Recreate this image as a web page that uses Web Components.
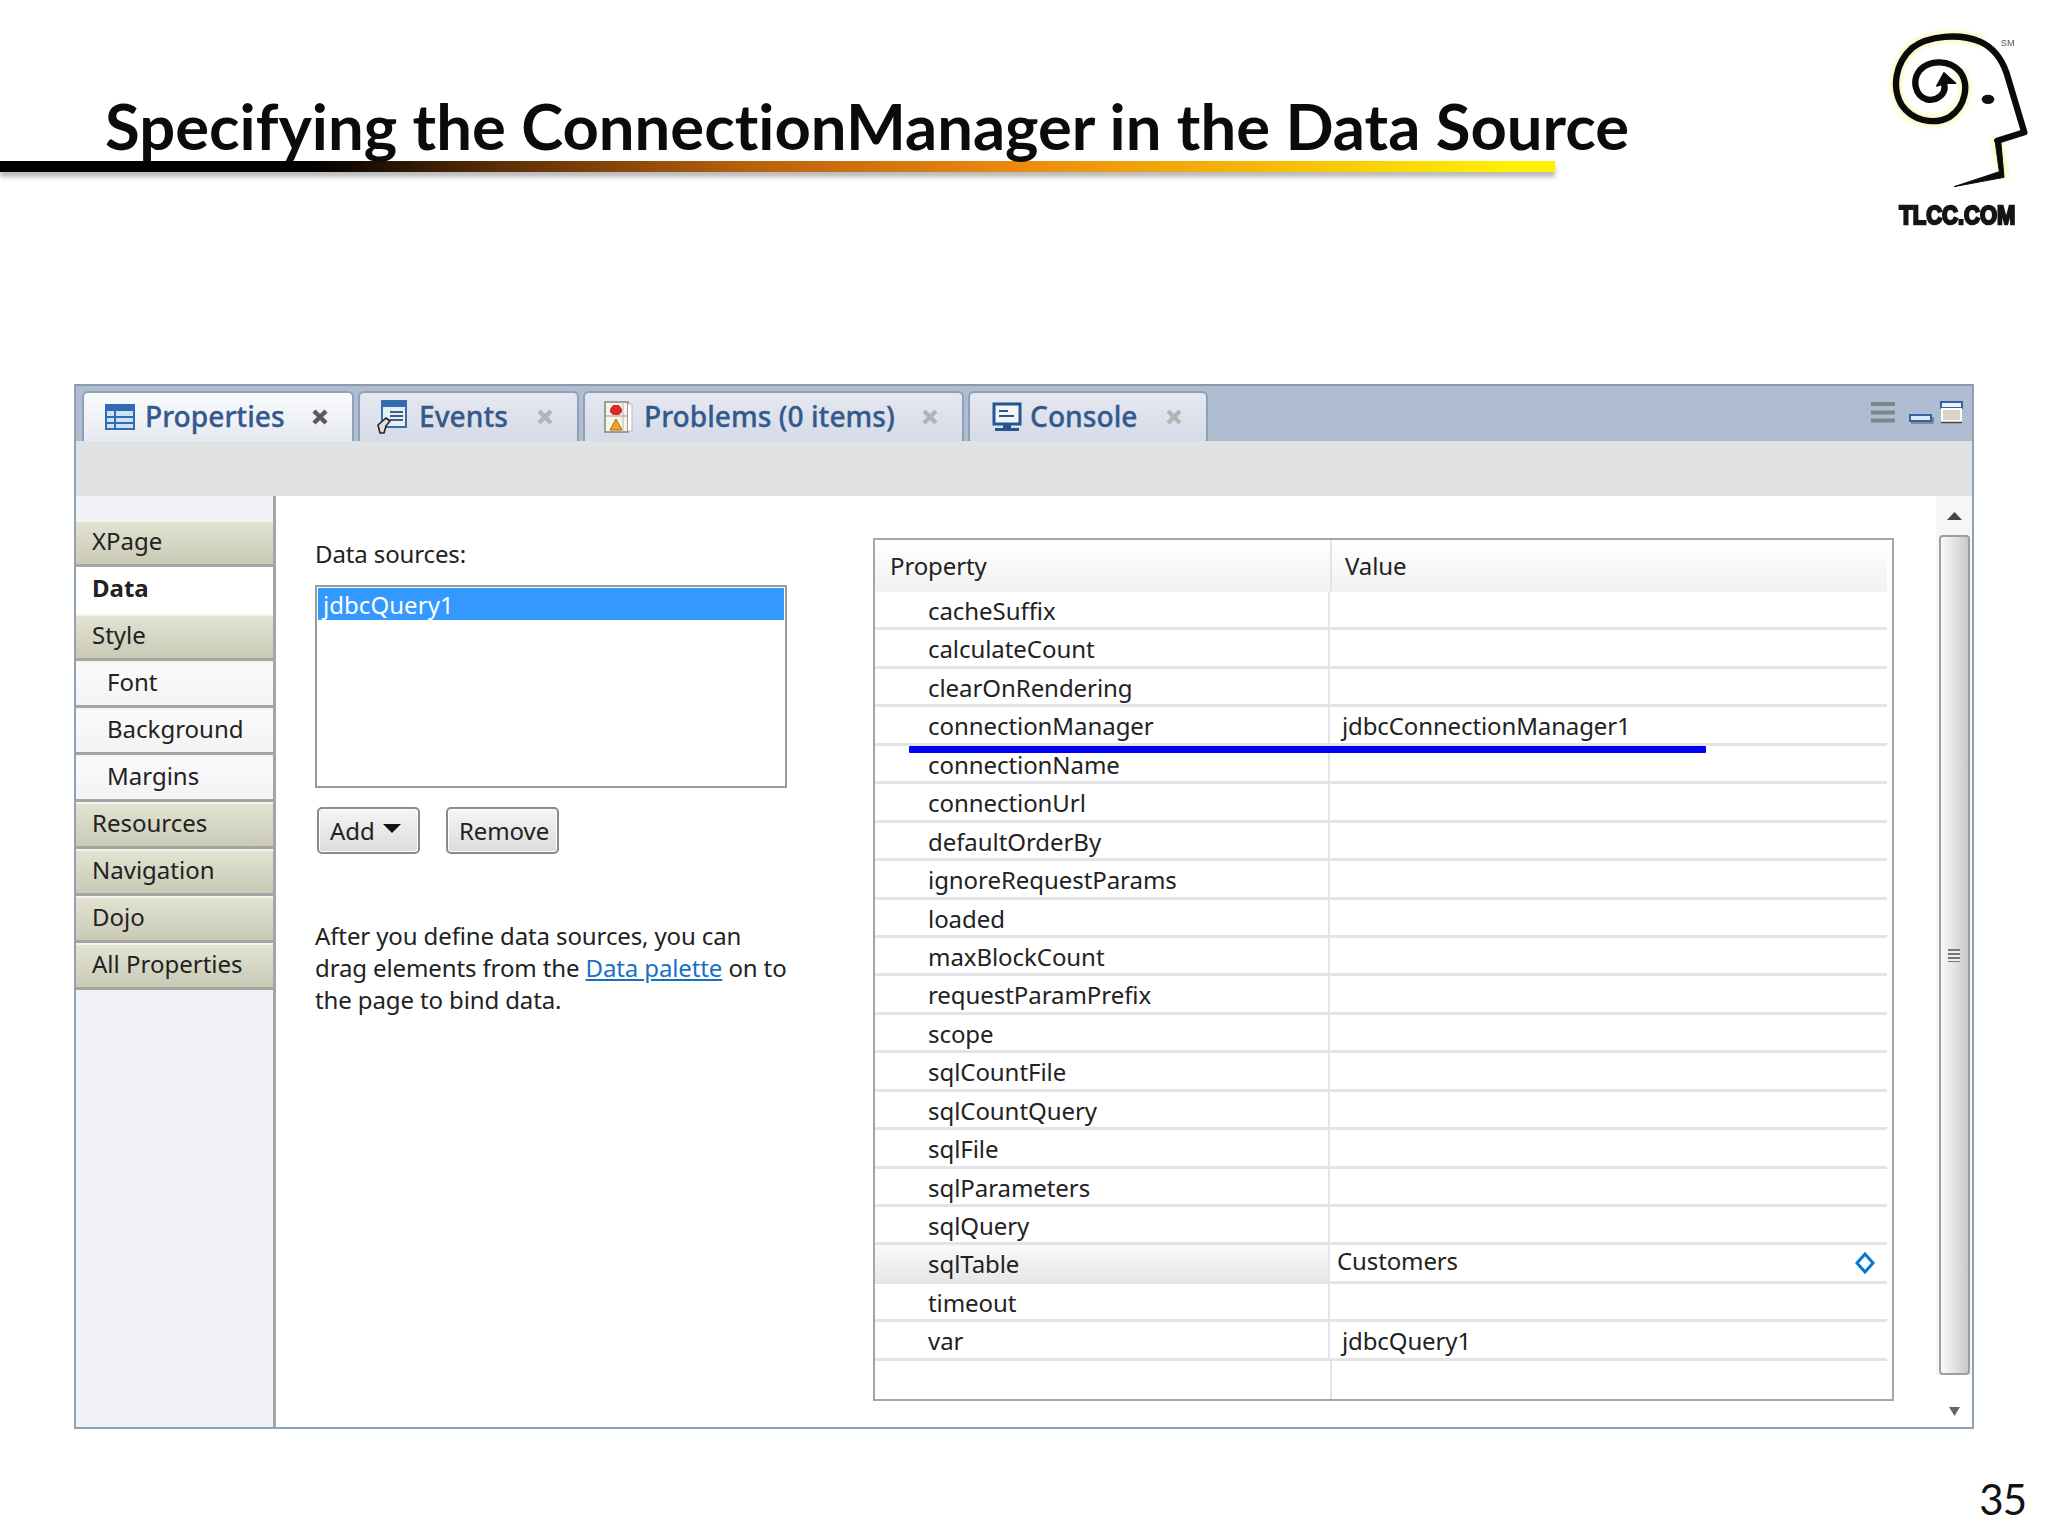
<!DOCTYPE html>
<html><head><meta charset="utf-8">
<style>
html,body{margin:0;padding:0;background:#fff}
body{width:2048px;height:1536px;overflow:hidden}
</style></head><body>
<x-slide>
  <x-slide-header slot="header" title-text="Specifying the ConnectionManager in the Data Source"></x-slide-header>
  <x-panel>
    <x-tab slot="tabs" active label="Properties" icon="table" style="--w:272px;--gap:10px;--pl:21px"></x-tab>
    <x-tab slot="tabs" label="Events" icon="events" style="--w:221px;--gap:12px;--pl:17px"></x-tab>
    <x-tab slot="tabs" label="Problems (0 items)" icon="problems" style="--w:381px;--gap:10px;--pl:19px"></x-tab>
    <x-tab slot="tabs" label="Console" icon="console" style="--w:240px;--gap:8px;--pl:22px"></x-tab>
    <x-side-item slot="side" label="XPage"></x-side-item>
    <x-side-item slot="side" label="Data" kind="current"></x-side-item>
    <x-side-item slot="side" label="Style"></x-side-item>
    <x-side-item slot="side" label="Font" kind="sub"></x-side-item>
    <x-side-item slot="side" label="Background" kind="sub"></x-side-item>
    <x-side-item slot="side" label="Margins" kind="sub"></x-side-item>
    <x-side-item slot="side" label="Resources"></x-side-item>
    <x-side-item slot="side" label="Navigation"></x-side-item>
    <x-side-item slot="side" label="Dojo"></x-side-item>
    <x-side-item slot="side" label="All Properties"></x-side-item>
    <x-data-sources slot="left"></x-data-sources>
    <x-prop-table slot="right">
      <x-prop-row name="cacheSuffix"></x-prop-row>
      <x-prop-row name="calculateCount"></x-prop-row>
      <x-prop-row name="clearOnRendering"></x-prop-row>
      <x-prop-row name="connectionManager" value="jdbcConnectionManager1"></x-prop-row>
      <x-prop-row name="connectionName"></x-prop-row>
      <x-prop-row name="connectionUrl"></x-prop-row>
      <x-prop-row name="defaultOrderBy"></x-prop-row>
      <x-prop-row name="ignoreRequestParams"></x-prop-row>
      <x-prop-row name="loaded"></x-prop-row>
      <x-prop-row name="maxBlockCount"></x-prop-row>
      <x-prop-row name="requestParamPrefix"></x-prop-row>
      <x-prop-row name="scope"></x-prop-row>
      <x-prop-row name="sqlCountFile"></x-prop-row>
      <x-prop-row name="sqlCountQuery"></x-prop-row>
      <x-prop-row name="sqlFile"></x-prop-row>
      <x-prop-row name="sqlParameters"></x-prop-row>
      <x-prop-row name="sqlQuery"></x-prop-row>
      <x-prop-row name="sqlTable" value="Customers" selected></x-prop-row>
      <x-prop-row name="timeout"></x-prop-row>
      <x-prop-row name="var" value="jdbcQuery1"></x-prop-row>
    </x-prop-table>
  </x-panel>
</x-slide>
<script>
const UI='"Noto Sans","Open Sans",sans-serif';
class Base extends HTMLElement{
  constructor(){super();this.attachShadow({mode:'open'});}
  connectedCallback(){this.shadowRoot.innerHTML=this.render();}
}
customElements.define('x-slide',class extends Base{render(){return `<style>
:host{display:flex;flex-direction:column;width:2048px;height:1536px;position:relative;font-family:${UI};color:#1a1a1a}
.win{margin:0 74px 0 74px}
footer{display:flex;justify-content:flex-end;padding:43px 22px 0 0;font:42px/54px Lato,"Liberation Sans",sans-serif;letter-spacing:-1px;color:#111}
</style><slot name="header"></slot><div class="win"><slot></slot></div><footer>35</footer>`}});

customElements.define('x-logo',class extends Base{render(){return `<style>:host{display:block;width:268px;height:250px}svg{display:block;filter:blur(.5px)}</style>
<svg width="268" height="250" viewBox="0 0 804 750">
<defs><filter id="b"><feGaussianBlur stdDeviation="8"/></filter></defs>
<g fill="none" stroke-linejoin="round" stroke-linecap="round">
<path d="M540 215C570 255 555 320 510 350C460 378 395 360 365 315C335 265 345 190 395 145C445 105 540 100 600 125M652 425L668 522" stroke="#f1f27a" stroke-width="30" filter="url(#b)" opacity=".6"/>
<path d="M490 245C505 280 470 305 440 298C405 288 395 240 420 210C450 178 510 180 540 215C570 255 555 320 510 350C460 378 395 360 365 315C335 265 345 190 395 145C445 105 540 100 600 125C645 145 668 185 680 220L733 397L652 422" stroke="#0b0b0b" stroke-width="19"/>
<path d="M645 420L658 515L522 560L672 532L662 420Z" fill="#0b0b0b" stroke="#0b0b0b" stroke-width="3"/>
<path d="M470 258L492 218L527 250L497 250Z" fill="#0b0b0b" stroke="#0b0b0b" stroke-width="4"/>
</g>
<ellipse cx="624" cy="298" rx="19" ry="14" fill="#111"/>
<text x="662" y="138" font-family="Liberation Sans,sans-serif" font-size="28" fill="#555">SM</text>
<text x="358" y="672" textLength="348" lengthAdjust="spacingAndGlyphs" font-family="Liberation Sans,sans-serif" font-weight="700" font-size="78" fill="#151515" stroke="#151515" stroke-width="7">TLCC.COM</text>
</svg>`}});

customElements.define('x-slide-header',class extends Base{render(){return `<style>
:host{display:grid;grid-template-columns:1fr 268px;height:384px;font-family:Lato,"Liberation Sans",sans-serif}
h1{margin:0;padding:84px 0 0 105px;height:77px;font:700 63.4px/83px Lato,"Liberation Sans",sans-serif;font-variant-ligatures:none;color:#0b0b0b;white-space:nowrap;position:relative;z-index:1}
.rule{width:1555px;height:11px;background:linear-gradient(90deg,#000 0,#000 20%,#5a2e06 32%,#b8600c 48%,#ea8a10 65%,#f5b508 80%,#fff000 97%,#fff000 100%);box-shadow:0 5px 4px rgba(120,120,120,.5)}
</style><div><h1>${this.getAttribute('title-text')}</h1><div class="rule"></div></div><x-logo></x-logo>`}});

const tabIcons={
table:`<svg width="30" height="26" viewBox="0 0 30 26"><rect x="1" y="1" width="28" height="24" fill="#cfe2f5" stroke="#2f6cb0" stroke-width="2"/><rect x="1" y="1" width="28" height="6" fill="#2f6cb0"/><path d="M2 13H28M2 19H28M10 7V25" stroke="#2f6cb0" stroke-width="2"/></svg>`,
events:`<svg width="30" height="34" viewBox="0 0 30 34"><rect x="5" y="1" width="24" height="26" fill="#e6eef8" stroke="#3a6ea8" stroke-width="2"/><rect x="5" y="1" width="24" height="6" fill="#2f6cb0"/><path d="M13 12H26M13 16H26M13 20H26" stroke="#3a5f88" stroke-width="2"/><path d="M1 25L9 18L13 21L9 26L7 33H3Z" fill="#ddd" stroke="#222" stroke-width="1.6"/></svg>`,
problems:`<svg width="30" height="32" viewBox="0 0 30 32"><rect x="1" y="1" width="23" height="30" fill="#f6f4ea" stroke="#8a8a80" stroke-width="1.6"/><path d="M24 3H28V30H24M19 1V31" fill="#fff" stroke="#b8b8ae"/><path d="M1 15H24" stroke="#999"/><path d="M9 4H15L18 8V11L15 14H9L6 11V8Z" fill="#d92a2a"/><path d="M12 18L18 29H6Z" fill="#f0a52a" stroke="#a86a10"/></svg>`,
console:`<svg width="30" height="30" viewBox="0 0 30 30"><rect x="2" y="2" width="26" height="20" fill="#f3f5fa" stroke="#24578f" stroke-width="3"/><path d="M7 9H16M7 14H22" stroke="#24578f" stroke-width="2"/><path d="M11 23H19V26H11Z" fill="#24578f"/><rect x="3" y="26" width="24" height="3" fill="#24578f"/></svg>`};
customElements.define('x-tab',class extends Base{render(){const a=this.hasAttribute('active');return `<style>
:host{display:flex;box-sizing:border-box;width:var(--w);height:50px;margin-right:4px;align-items:center;padding:0 24px 0 var(--pl);border:2px solid #8ea1b8;border-bottom:0;border-radius:6px 6px 0 0;background:linear-gradient(180deg,${a?'#fafbfd,#e6e9f1':'#e6e8f0,#d5dbe7'});color:#34598c;font:500 28.2px/36px ${UI};-webkit-text-stroke:.3px #34598c;white-space:nowrap}
.i{display:flex;margin-right:var(--gap)}
.l{position:relative;top:-1px}
svg.x{margin-left:auto;display:block}
</style><span class="i">${tabIcons[this.getAttribute('icon')]}</span><span class="l">${this.getAttribute('label')}</span><svg class="x" width="16" height="16" viewBox="0 0 16 16"><path d="M2 2L14 14M14 2L2 14" stroke="${a?'#5a5a5a':'#b4b4b4'}" stroke-width="4.4"/></svg>`}});

customElements.define('x-side-item',class extends Base{render(){const k=this.getAttribute('kind');
const bg=k==='current'?'#fff':k==='sub'?'linear-gradient(#fbfbfc,#f3f3f5)':'linear-gradient(#e3e3d3,#c9c9b6)';
return `<style>
:host{display:flex;align-items:center;box-sizing:border-box;height:47px;padding-left:${k==='sub'?31:16}px;padding-bottom:5px;background:${bg};
border-top:${k==='current'?'0':'2px solid #f5f5ee'};border-bottom:${k==='current'?'0':'3px solid #a5a6a4'};
font:${k==='current'?'700':'400'} 24px/30px ${UI};color:#222;white-space:nowrap}
</style>${this.getAttribute('label')}`}});

customElements.define('x-push-button',class extends Base{render(){return `<style>
:host{display:inline-flex;align-items:center;box-sizing:border-box;height:47px;padding:0 9px 0 11px;border:2px solid #8b8b8b;border-radius:5px;background:linear-gradient(#f5f5f5,#dcdcdc);font:24px/30px ${UI};letter-spacing:-.1px;color:#222;box-shadow:inset 0 0 0 1px #fff}
.c{width:0;height:0;margin-left:8px;margin-top:-5px;border:9px solid transparent;border-top:9px solid #111;border-bottom:0}
</style><slot></slot>${this.hasAttribute('menu')?'<span class="c"></span>':''}`}});

customElements.define('x-data-sources',class extends Base{render(){return `<style>
:host{display:block;width:480px;font:24px/32px ${UI};letter-spacing:-.12px;color:#222}
.list{box-sizing:border-box;width:472px;height:203px;margin-top:15px;border:2px solid #9a9a9a;padding:1px;background:#fff}
.sel{height:32px;line-height:34px;background:#3399ff;color:#fff;padding-left:5px;letter-spacing:.05px}
.btns{display:flex;gap:26px;margin-top:19px;padding-left:2px}
p{margin:66px 0 0;width:490px}
a{color:#1a6fc4;text-decoration:underline}
</style><div>Data sources:</div><div class="list"><div class="sel">jdbcQuery1</div></div>
<div class="btns"><x-push-button menu style="width:103px">Add</x-push-button><x-push-button style="width:113px">Remove</x-push-button></div>
<p>After you define data sources, you can<br>drag elements from the <a>Data palette</a> on to<br>the page to bind data.</p>`}});

customElements.define('x-prop-row',class extends Base{render(){const s=this.hasAttribute('selected');return `<style>
:host{display:grid;grid-template-columns:455px 1fr;box-sizing:border-box;height:38.45px;font:24px/38px ${UI};color:#222;border-bottom:3px solid #e4e4e8;white-space:nowrap}
.n{padding-left:53px;letter-spacing:-.06px;border-right:2px solid #e4e4e8;${s?'background:linear-gradient(#fafafa,#e6e6e6);':''}}
.v{position:relative;padding-left:${s?7:12}px;${s?'margin-top:-3px;':''}}
svg{position:absolute;right:12px;top:10px}
</style><div class="n">${this.getAttribute('name')}</div><div class="v">${this.getAttribute('value')||''}${s?'<svg width="20" height="22" viewBox="0 0 20 22"><path d="M10 2L18 11L10 20L2 11Z" fill="#fff" stroke="#0a78d0" stroke-width="3"/></svg>':''}</div>`}});

customElements.define('x-prop-table',class extends Base{render(){return `<style>
:host{display:block;box-sizing:border-box;position:relative;width:1021px;height:863px;border:2px solid #a6a6a6;background:#fff;font:24px/34px ${UI};letter-spacing:-.12px;color:#222;padding-right:5px}
.h{display:grid;grid-template-columns:455px 1fr;height:52px;align-items:center;background:linear-gradient(#fff,#f1f1f1)}
.h div{padding-left:15px}.h div+div{padding-left:13px;border-left:2px solid #e4e4e8;line-height:52px}
.fill{position:absolute;left:455px;bottom:0;height:38px;border-left:2px solid #e4e4e8}
.mark{position:absolute;left:34px;top:206px;width:797px;height:7px;background:#0000ff;border-radius:1px}
</style><div class="h"><div>Property</div><div>Value</div></div><slot></slot><div class="fill"></div><div class="mark"></div>`}});

customElements.define('x-scrollbar',class extends Base{render(){return `<style>
:host{display:flex;flex-direction:column;align-items:center;box-sizing:border-box;width:36px;background:#f6f6f7}
.a{height:39px;display:flex;align-items:center;justify-content:center;flex:none}
.t{box-sizing:border-box;width:31px;height:840px;border:2px solid #9d9d9d;border-radius:4px;background:linear-gradient(90deg,#fafafa,#cacaca);display:flex;align-items:center;justify-content:center;flex:none}
.g{width:12px;height:13px;background:repeating-linear-gradient(#777 0 2px,#eee 2px 4px)}
.d{flex:1;display:flex;align-items:center;justify-content:center;background:#fff;align-self:stretch;padding-top:20px}
</style><div class="a"><svg width="15" height="8"><path d="M7.5 0L15 8H0Z" fill="#444"/></svg></div><div class="t"><div class="g"></div></div><div class="d"><svg width="11" height="9"><path d="M0 0H11L5.5 9Z" fill="#666"/></svg></div>`}});

customElements.define('x-panel',class extends Base{render(){return `<style>
:host{display:flex;flex-direction:column;box-sizing:border-box;width:1900px;height:1045px;border:2px solid #8fa2b6;border-top-color:#8b9bad;background:#fff}
.bar{display:flex;align-items:flex-end;flex:none;height:55px;background:#aebdd0;padding-left:6px}
.ctl{margin-left:auto;align-self:flex-start;margin-top:13px;margin-right:8px}
.tool{flex:none;height:55px;background:#e1e2e3}
.body{flex:1;display:flex;min-height:0}
.side{box-sizing:border-box;flex:none;width:200px;border-right:3px solid #a3a5a6;background:#f1f2f6;padding-top:24px}
.main{flex:1;display:flex;padding:42px 0 0 39px}
.left{width:558px;flex:none}
</style>
<div class="bar"><slot name="tabs"></slot>
<svg class="ctl" width="95" height="26" viewBox="0 0 95 26"><path d="M2 5H26M2 13.5H26M2 21.5H26" stroke="#7d858c" stroke-width="4" fill="none"/><rect x="41" y="16" width="21" height="6" fill="#d8ecff" stroke="#2f62a6" stroke-width="2"/><path d="M42 24H64V18" stroke="#556" fill="none"/><rect x="72" y="3" width="21" height="6" fill="#eaf4ff" stroke="#2f62a6" stroke-width="2"/><rect x="73" y="10" width="19" height="12" fill="#d8d5c4" stroke="#fff" stroke-width="2"/><path d="M72 23.5H93" stroke="#444" stroke-width="1.5"/></svg></div>
<div class="tool"></div>
<div class="body"><div class="side"><slot name="side"></slot></div>
<div class="main"><div class="left"><slot name="left"></slot></div><div><slot name="right"></slot></div><div style="flex:1"></div><x-scrollbar style="margin-top:-42px"></x-scrollbar></div></div>`}});
</script>
</body></html>
